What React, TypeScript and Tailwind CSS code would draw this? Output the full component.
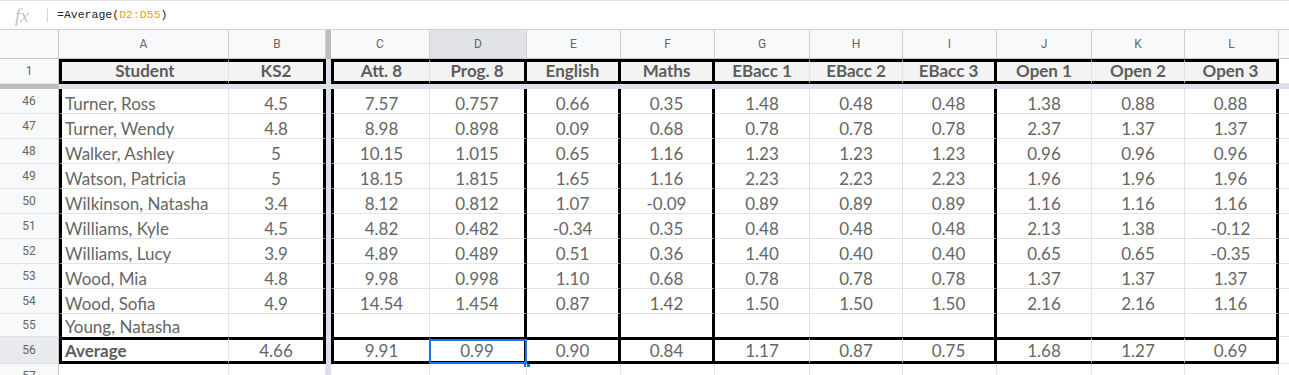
import React from "react"

type Kind = "head" | "data" | "last" | "avg" | "empty"

interface Col {
  letter: string
  w: string
  line: string
  left?: boolean
}

// column geometry taken from the sheet (B | freeze | C)
const COLS: Col[] = [
  { letter: "A", w: "w-[170px]", line: "border-l-[3px] border-l-black border-r border-r-[#e2e3e3]", left: true },
  { letter: "B", w: "w-[97px]", line: "border-r-[3px] border-r-black" },
  { letter: "C", w: "w-[99px]", line: "border-l-[3px] border-l-black border-r border-r-[#e2e3e3]" },
  { letter: "D", w: "w-[97px]", line: "border-r-[3px] border-r-black" },
  { letter: "E", w: "w-[94px]", line: "border-r-[3px] border-r-black" },
  { letter: "F", w: "w-[94px]", line: "border-r-[3px] border-r-black" },
  { letter: "G", w: "w-[95px]", line: "border-r border-r-[#e2e3e3]" },
  { letter: "H", w: "w-[93px]", line: "border-r border-r-[#e2e3e3]" },
  { letter: "I", w: "w-[94px]", line: "border-r-[3px] border-r-black" },
  { letter: "J", w: "w-[95px]", line: "border-r border-r-[#e2e3e3]" },
  { letter: "K", w: "w-[93px]", line: "border-r border-r-[#e2e3e3]" },
  { letter: "L", w: "w-[94px]", line: "border-r-[3px] border-r-black" },
]

const ROW_H: Record<Kind, string> = {
  head: "h-[25px]",
  data: "h-[25px]",
  last: "h-[23px]",
  avg: "h-[27px]",
  empty: "h-[25px]",
}

const ROW_CELL: Record<Kind, string> = {
  head: "border-y-[3px] border-y-black bg-[#f3f3f3] font-bold text-[#5c5c5c] items-end pb-[2px]",
  data: "border-b border-b-[#e2e3e3] items-end pb-px",
  last: "items-end pb-[2px]",
  avg: "border-y-[3px] border-y-black items-end pb-[2px]",
  empty: "border-b border-b-[#e2e3e3]",
}

const HEADERS = ["Student", "KS2", "Att. 8", "Prog. 8", "English", "Maths", "EBacc 1", "EBacc 2", "EBacc 3", "Open 1", "Open 2", "Open 3"]

const STUDENTS: string[][] = [
  ["46", "Turner, Ross", "4.5", "7.57", "0.757", "0.66", "0.35", "1.48", "0.48", "0.48", "1.38", "0.88", "0.88"],
  ["47", "Turner, Wendy", "4.8", "8.98", "0.898", "0.09", "0.68", "0.78", "0.78", "0.78", "2.37", "1.37", "1.37"],
  ["48", "Walker, Ashley", "5", "10.15", "1.015", "0.65", "1.16", "1.23", "1.23", "1.23", "0.96", "0.96", "0.96"],
  ["49", "Watson, Patricia", "5", "18.15", "1.815", "1.65", "1.16", "2.23", "2.23", "2.23", "1.96", "1.96", "1.96"],
  ["50", "Wilkinson, Natasha", "3.4", "8.12", "0.812", "1.07", "-0.09", "0.89", "0.89", "0.89", "1.16", "1.16", "1.16"],
  ["51", "Williams, Kyle", "4.5", "4.82", "0.482", "-0.34", "0.35", "0.48", "0.48", "0.48", "2.13", "1.38", "-0.12"],
  ["52", "Williams, Lucy", "3.9", "4.89", "0.489", "0.51", "0.36", "1.40", "0.40", "0.40", "0.65", "0.65", "-0.35"],
  ["53", "Wood, Mia", "4.8", "9.98", "0.998", "1.10", "0.68", "0.78", "0.78", "0.78", "1.37", "1.37", "1.37"],
  ["54", "Wood, Sofia", "4.9", "14.54", "1.454", "0.87", "1.42", "1.50", "1.50", "1.50", "2.16", "2.16", "1.16"],
]

const AVERAGE = ["Average", "4.66", "9.91", "0.99", "0.90", "0.84", "1.17", "0.87", "0.75", "1.68", "1.27", "0.69"]

function RowNum({ n, active }: { n: string; active?: boolean }) {
  return (
    <div
      className={`w-[59px] shrink-0 flex items-center justify-center border-r border-r-[#c7c7c7] border-b border-b-[#e2e3e3] text-[12px] text-[#666] font-['Roboto',sans-serif] ${
        active ? "bg-[#e8eaed]" : "bg-[#f8f9fa]"
      }`}
    >
      {n}
    </div>
  )
}

function Row({ n, kind, values }: { n: string; kind: Kind; values: string[] }) {
  return (
    <div className={`flex ${ROW_H[kind]}`}>
      <RowNum n={n} active={kind === "avg"} />
      {COLS.map((col, i) => {
        const line = kind === "empty" ? "border-r border-r-[#e2e3e3]" : col.line
        const align = col.left && kind !== "head" ? "justify-start pl-[3px]" : "justify-center"
        const bold = col.left && kind === "avg" ? "font-bold text-[#5c5c5c]" : ""
        const selected = kind === "avg" && col.letter === "D"
        return (
          <React.Fragment key={col.letter}>
            {i === 2 && <div className="w-[5px] shrink-0 bg-[#dadfe8]" />}
            <div className={`relative flex shrink-0 ${col.w} ${line} ${ROW_CELL[kind]} ${align} ${bold}`}>
              <span className="leading-4 whitespace-nowrap">{values[i] ?? ""}</span>
              {selected && (
                <div className="absolute -left-px -top-px -right-[3px] -bottom-[3px] border-2 border-[#1a73e8]">
                  <div className="absolute -right-[5px] -bottom-[5px] w-[6px] h-[6px] bg-[#1a73e8]" />
                </div>
              )}
            </div>
          </React.Fragment>
        )
      })}
      <div className="flex-1 border-b border-b-[#e2e3e3]" />
    </div>
  )
}

export default function App() {
  return (
    <div className="w-[1289px] h-[375px] overflow-hidden bg-white text-[17px] text-[#666] font-['Lato',sans-serif]">
      {/* formula bar */}
      <div className="h-[30px] border-t border-t-[#e3e3e3] border-b border-b-[#d0d0d0] flex items-center">
        <span className="w-[47px] pl-[15px] italic text-[19px] leading-none text-[#c4c4c4] font-['Liberation_Serif',serif]">fx</span>
        <span className="w-px h-[14px] bg-[#d6d6d6]" />
        <span className="pl-[9px] text-[11.5px] text-[#222] font-['Liberation_Mono',monospace]">
          =Average(<span className="text-[#f4a100]">D2:D55</span>)
        </span>
      </div>

      {/* column letters */}
      <div className="flex h-[29px] bg-[#f8f9fa] text-[12px] text-[#666] font-['Roboto',sans-serif]">
        <div className="w-[59px] shrink-0 border-r border-r-[#c7c7c7] border-b border-b-[#c7c7c7]" />
        {COLS.map((col, i) => (
          <React.Fragment key={col.letter}>
            {i === 2 && <div className="w-[5px] shrink-0 bg-[#bdbdbd]" />}
            <div
              className={`shrink-0 ${col.w} flex items-center justify-center border-r border-r-[#d0d0d0] border-b border-b-[#c7c7c7] ${
                col.letter === "D" ? "bg-[#e1e3e7]" : ""
              }`}
            >
              {col.letter}
            </div>
          </React.Fragment>
        ))}
        <div className="flex-1 border-b border-b-[#c7c7c7]" />
      </div>

      <Row n="1" kind="head" values={HEADERS} />

      {/* frozen row divider */}
      <div className="flex h-[5px]">
        <div className="w-[59px] shrink-0 bg-[#bdbdbd]" />
        <div className="flex-1 bg-[#dadfe8]" />
      </div>

      {STUDENTS.map((r) => (
        <Row key={r[0]} n={r[0]} kind="data" values={r.slice(1)} />
      ))}
      <Row n="55" kind="last" values={["Young, Natasha"]} />
      <Row n="56" kind="avg" values={AVERAGE} />
      <Row n="57" kind="empty" values={[]} />
    </div>
  )
}
